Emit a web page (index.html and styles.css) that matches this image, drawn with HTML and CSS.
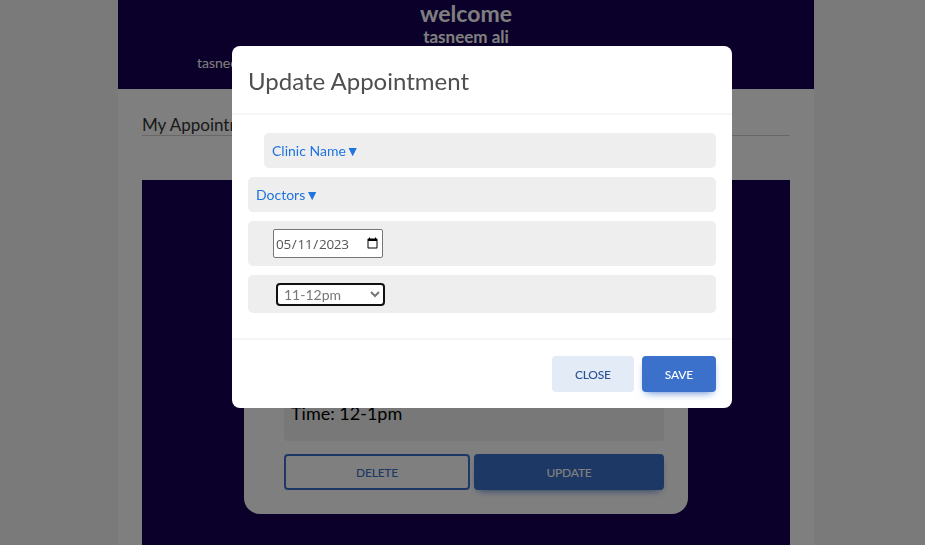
FILE: index.html
```html
<!DOCTYPE html>
<html lang="en">
<head>
<meta charset="utf-8">
<title>My Appointments</title>
<link rel="stylesheet" href="styles.css">
</head>
<body>
<div class="page">
  <header class="top">
    <h1 class="welcome">welcome</h1>
    <div class="user">tasneem ali</div>
    <nav class="nav"><span>tasneem ali</span></nav>
  </header>
  <main class="content">
    <h2 class="section-title">My Appointments</h2>
    <section class="board">
      <div class="card">
        <div class="info">
          <p>Clinic: Dental Care</p>
          <p>Doctor: Ahmed Samir</p>
          <p>Date: 05/11/2023</p>
          <p>Time: 12-1pm</p>
        </div>
        <div class="card-actions">
          <button class="btn btn-outline">Delete</button>
          <button class="btn btn-primary">Update</button>
        </div>
      </div>
    </section>
  </main>
</div>

<div class="backdrop">
  <div class="modal">
    <div class="modal-header">
      <h3 class="modal-title">Update Appointment</h3>
    </div>
    <div class="modal-body">
      <div class="field field-indent"><span class="drop">Clinic Name▼</span></div>
      <div class="field"><span class="drop">Doctors▼</span></div>
      <div class="field field-date"><input class="date" type="date" value="2023-05-11"></div>
      <div class="field field-time">
        <select class="time">
          <option>11-12pm</option>
          <option>12-1pm</option>
          <option>1-2pm</option>
        </select>
      </div>
    </div>
    <div class="modal-footer">
      <button class="btn btn-light">Close</button>
      <button class="btn btn-primary">Save</button>
    </div>
  </div>
</div>
</body>
</html>
```
FILE: styles.css
```css
* { box-sizing: border-box; }
html, body { margin: 0; padding: 0; }
body {
  background: #f4f4f4;
  font-family: "Lato", "Noto Sans", sans-serif;
  height: 545px;
  overflow: hidden;
}
.page {
  width: 696px;
  margin-left: 118px;
  background: #fff;
  min-height: 545px;
}
.top {
  background: #160052;
  height: 89px;
  color: #fff;
  text-align: center;
}
.welcome {
  margin: 0;
  font-size: 23px;
  font-weight: 700;
  line-height: 26px;
}
.user {
  font-size: 17px;
  font-weight: 700;
  line-height: 22px;
}
.nav {
  text-align: left;
  padding-left: 79px;
  font-size: 14px;
  line-height: 18px;
  margin-top: 6px;
}
.content { padding: 0 24px; }
.section-title {
  margin: 0;
  padding-top: 25px;
  font-size: 17px;
  font-weight: 400;
  color: #333;
  line-height: 21px;
  border-bottom: 1px solid #cfcfcf;
}
.board {
  margin-top: 44px;
  background: #160052;
  padding: 103px 0 60px;
  display: flex;
  justify-content: center;
}
.card {
  width: 444px;
  background: #fff;
  border-radius: 16px;
  padding: 24px 24px 24px 40px;
}
.info {
  background: #f0f0f0;
  border-radius: 4px;
  padding: 12px 7px 14px;
}
.info p {
  margin: 0;
  font-size: 18px;
  line-height: 27px;
  color: #000;
}
.card-actions {
  display: flex;
  gap: 4px;
  margin-top: 13px;
}
.card-actions .btn-outline { width: 186px; }
.card-actions .btn-primary { flex: 1; }
.btn {
  font-family: inherit;
  font-size: 12px;
  font-weight: 500;
  text-transform: uppercase;
  letter-spacing: -0.2px;
  line-height: 18px;
  padding: 10px 23px 8px;
  border: 0;
  border-radius: 4px;
  cursor: pointer;
}
.btn-primary {
  background: #3b71ca;
  color: #fff;
  box-shadow: 0 4px 9px -4px #3b71ca;
}
.btn-outline {
  background: transparent;
  border: 2px solid #3b71ca;
  color: #3b71ca;
  padding: 8px 21px 6px;
}
.btn-light {
  background: #e3ebf7;
  color: #285192;
}
.backdrop {
  position: fixed;
  inset: 0;
  background: rgba(0, 0, 0, 0.5);
  display: flex;
  align-items: flex-start;
  padding: 46px 0 0 232px;
}
.modal {
  width: 500px;
  background: #fff;
  border-radius: 8px;
}
.modal-header {
  padding: 17px 16px 15px;
  border-bottom: 2px solid #f5f5f5;
}
.modal-title {
  margin: 0;
  font-size: 24px;
  font-weight: 400;
  line-height: 35px;
  color: #4f4f4f;
}
.modal-body { padding: 18px 16px 16px; }
.field {
  background: #eeeeee;
  border-radius: 5px;
  padding: 8px;
  margin-bottom: 9px;
  font-size: 14px;
  line-height: 19px;
}
.field-indent { margin-left: 16px; }
.drop { color: #1f74e0; }
.field-date { padding: 8px 25px; }
.field-time { padding: 8px 28px 7px; }
.date {
  display: block;
  width: 110px;
  height: 29px;
  border: 1px solid #767676;
  border-radius: 2px;
  padding: 0 1px;
  font-family: "Open Sans", "Noto Sans", sans-serif;
  font-size: 13.5px;
  letter-spacing: -0.3px;
  color: #555;
  background: #fff;
}
.time {
  display: block;
  width: 109px;
  height: 23px;
  border: 2px solid #111;
  border-radius: 4px;
  padding: 0 0 0 2px;
  font-family: inherit;
  font-size: 14px;
  color: #777;
  background: #fff;
}
.modal-footer {
  border-top: 2px solid #f5f5f5;
  padding: 16px;
  display: flex;
  justify-content: flex-end;
  gap: 8px;
}
```
